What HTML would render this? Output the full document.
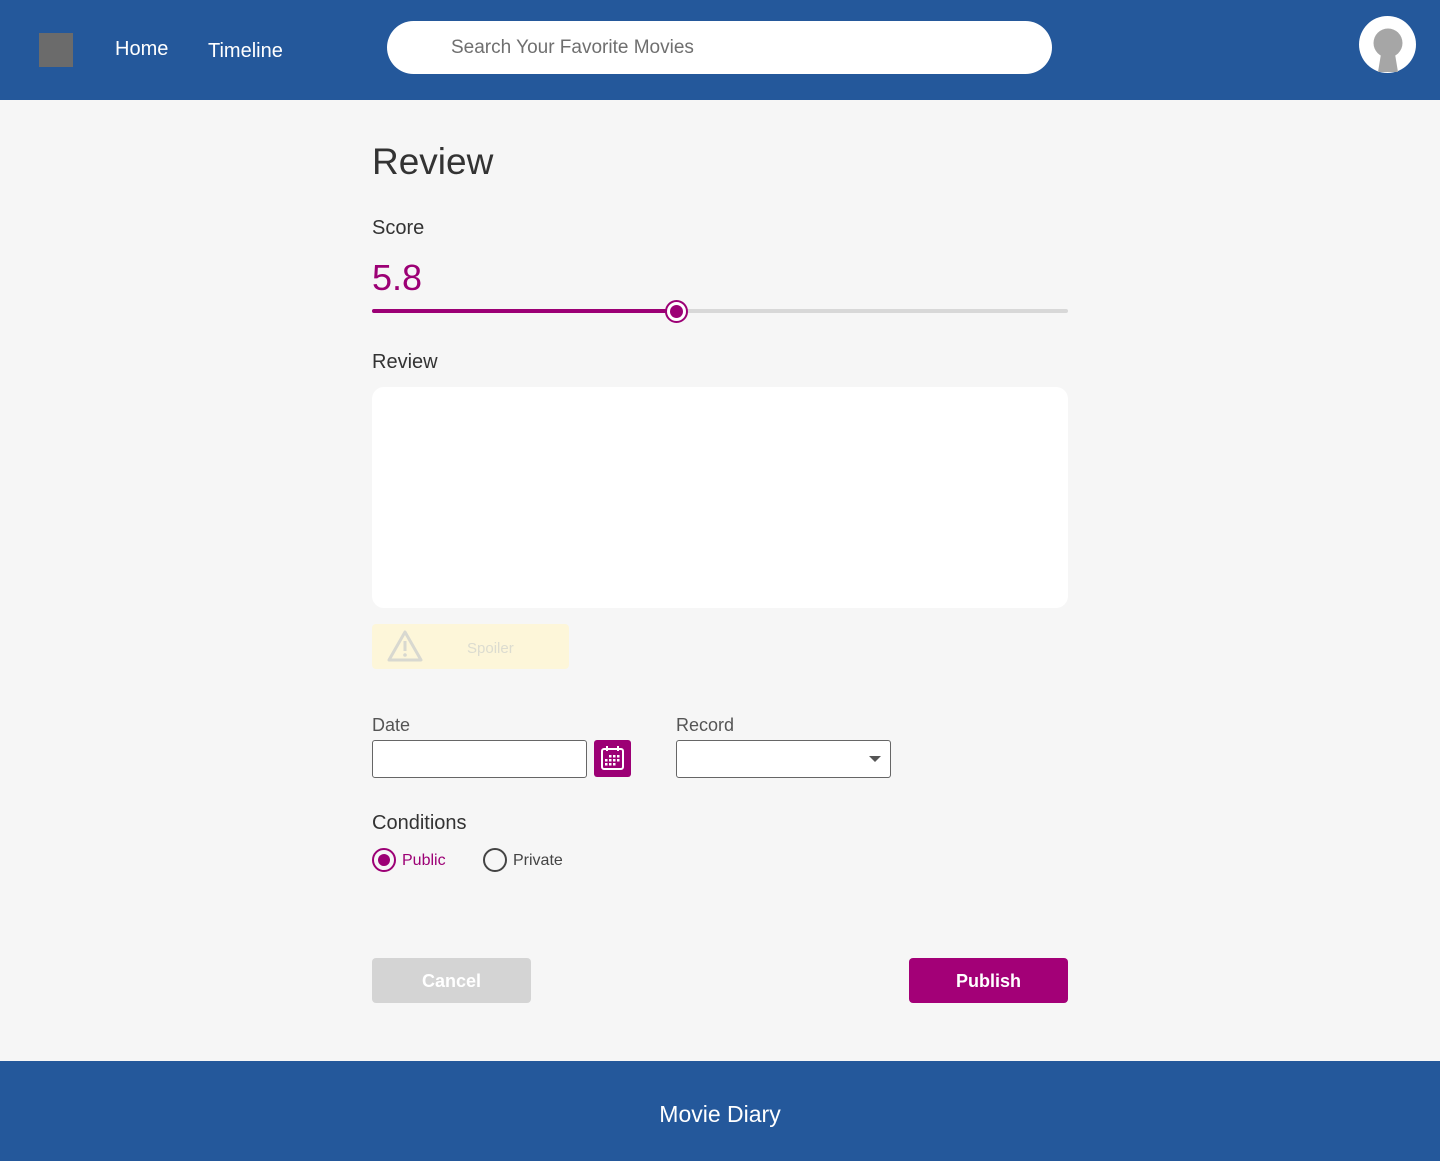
<!DOCTYPE html>
<html><head><meta charset="utf-8"><style>
*{margin:0;padding:0;box-sizing:border-box}
html,body{width:1440px;height:1161px;overflow:hidden}
body{background:#f6f6f6;font-family:"Liberation Sans",sans-serif;position:relative;color:#333}
.a{position:absolute}
header{position:absolute;left:0;top:0;width:1440px;height:100px;background:#24589b}
footer{position:absolute;left:0;top:1061px;width:1440px;height:100px;background:#24589b;color:#fff;font-size:23px;text-align:center;line-height:106px}
</style></head><body>
<header>
<div class="a" style="left:39px;top:33px;width:34px;height:34px;background:#6b6b6b"></div>
<div class="a" style="left:115px;top:38px;color:#fff;font-size:20px">Home</div>
<div class="a" style="left:208px;top:40px;color:#fff;font-size:20px">Timeline</div>
<div class="a" style="left:387px;top:21px;width:665px;height:53px;background:#fff;border-radius:27px"></div>
<div class="a" style="left:451px;top:37px;color:#6f6f6f;font-size:19px">Search Your Favorite Movies</div>
<svg class="a" style="left:1359px;top:16px" width="57" height="57" viewBox="0 0 57 57"><circle cx="28.5" cy="28.5" r="28.5" fill="#fff"/><circle cx="29" cy="27" r="14.5" fill="#a6a6a6"/><path d="M23 32 L19 56 L39 56 L35 32Z" fill="#a6a6a6"/></svg>
</header>
<div class="a" style="left:372px;top:141px;font-size:37px;color:#333">Review</div>
<div class="a" style="left:372px;top:217px;font-size:20px">Score</div>
<div class="a" style="left:372px;top:257px;font-size:36px;color:#9c0075">5.8</div>
<div class="a" style="left:372px;top:309px;width:696px;height:4px;background:#d8d8d8;border-radius:2px"></div>
<div class="a" style="left:372px;top:309px;width:305px;height:4px;background:#9c0075;border-radius:2px"></div>
<div class="a" style="left:665px;top:300px;width:23px;height:23px;border-radius:50%;border:2px solid #9c0075;background:#fff"></div>
<div class="a" style="left:670px;top:305px;width:13px;height:13px;border-radius:50%;background:#9c0075"></div>
<div class="a" style="left:372px;top:351px;font-size:20px">Review</div>
<div class="a" style="left:372px;top:387px;width:696px;height:221px;background:#fff;border-radius:12px"></div>
<div class="a" style="left:372px;top:624px;width:197px;height:45px;background:#fdf6d9;border-radius:4px"></div>
<svg class="a" style="left:386px;top:629px" width="38" height="34" viewBox="0 0 38 34"><path d="M19 3 L35 31 L3 31 Z" fill="none" stroke="#d8d8d0" stroke-width="3" stroke-linejoin="round"/><line x1="19" y1="12" x2="19" y2="22" stroke="#d8d8d0" stroke-width="3"/><circle cx="19" cy="26" r="1.8" fill="#d8d8d0"/></svg>
<div class="a" style="left:467px;top:640px;font-size:15px;color:#dcdcd0">Spoiler</div>
<div class="a" style="left:372px;top:715px;font-size:18px;color:#555">Date</div>
<div class="a" style="left:372px;top:740px;width:215px;height:38px;background:#fff;border:1px solid #666;border-radius:3px"></div>
<div class="a" style="left:594px;top:740px;width:37px;height:37px;background:#9c0075;border-radius:3px"></div>
<svg class="a" style="left:600px;top:745px" width="25" height="26" viewBox="0 0 25 26"><rect x="2" y="4" width="21" height="20" rx="2" fill="none" stroke="#fff" stroke-width="2"/><line x1="7" y1="1" x2="7" y2="6" stroke="#fff" stroke-width="2"/><line x1="18" y1="1" x2="18" y2="6" stroke="#fff" stroke-width="2"/><g fill="#fff"><rect x="9" y="10" width="2.5" height="2.5"/><rect x="13" y="10" width="2.5" height="2.5"/><rect x="17" y="10" width="2.5" height="2.5"/><rect x="5" y="14" width="2.5" height="2.5"/><rect x="9" y="14" width="2.5" height="2.5"/><rect x="13" y="14" width="2.5" height="2.5"/><rect x="17" y="14" width="2.5" height="2.5"/><rect x="5" y="18" width="2.5" height="2.5"/><rect x="9" y="18" width="2.5" height="2.5"/><rect x="13" y="18" width="2.5" height="2.5"/></g></svg>
<div class="a" style="left:676px;top:715px;font-size:18px;color:#555">Record</div>
<div class="a" style="left:676px;top:740px;width:215px;height:38px;background:#fff;border:1px solid #666;border-radius:3px"></div>
<div class="a" style="left:869px;top:756px;width:0;height:0;border-left:6px solid transparent;border-right:6px solid transparent;border-top:6px solid #555"></div>
<div class="a" style="left:372px;top:812px;font-size:20px">Conditions</div>
<div class="a" style="left:372px;top:848px;width:24px;height:24px;border-radius:50%;border:2px solid #9c0075"></div>
<div class="a" style="left:378px;top:854px;width:12px;height:12px;border-radius:50%;background:#9c0075"></div>
<div class="a" style="left:402px;top:852px;font-size:16px;color:#9c0075">Public</div>
<div class="a" style="left:483px;top:848px;width:24px;height:24px;border-radius:50%;border:2px solid #444"></div>
<div class="a" style="left:513px;top:852px;font-size:16px;color:#444">Private</div>
<div class="a" style="left:372px;top:958px;width:159px;height:45px;background:#d4d4d4;border-radius:4px;color:#fff;font-size:18px;font-weight:bold;text-align:center;line-height:46px">Cancel</div>
<div class="a" style="left:909px;top:958px;width:159px;height:45px;background:#a30077;border-radius:4px;color:#fff;font-size:18px;font-weight:bold;text-align:center;line-height:46px">Publish</div>
<footer>Movie Diary</footer>
</body></html>
